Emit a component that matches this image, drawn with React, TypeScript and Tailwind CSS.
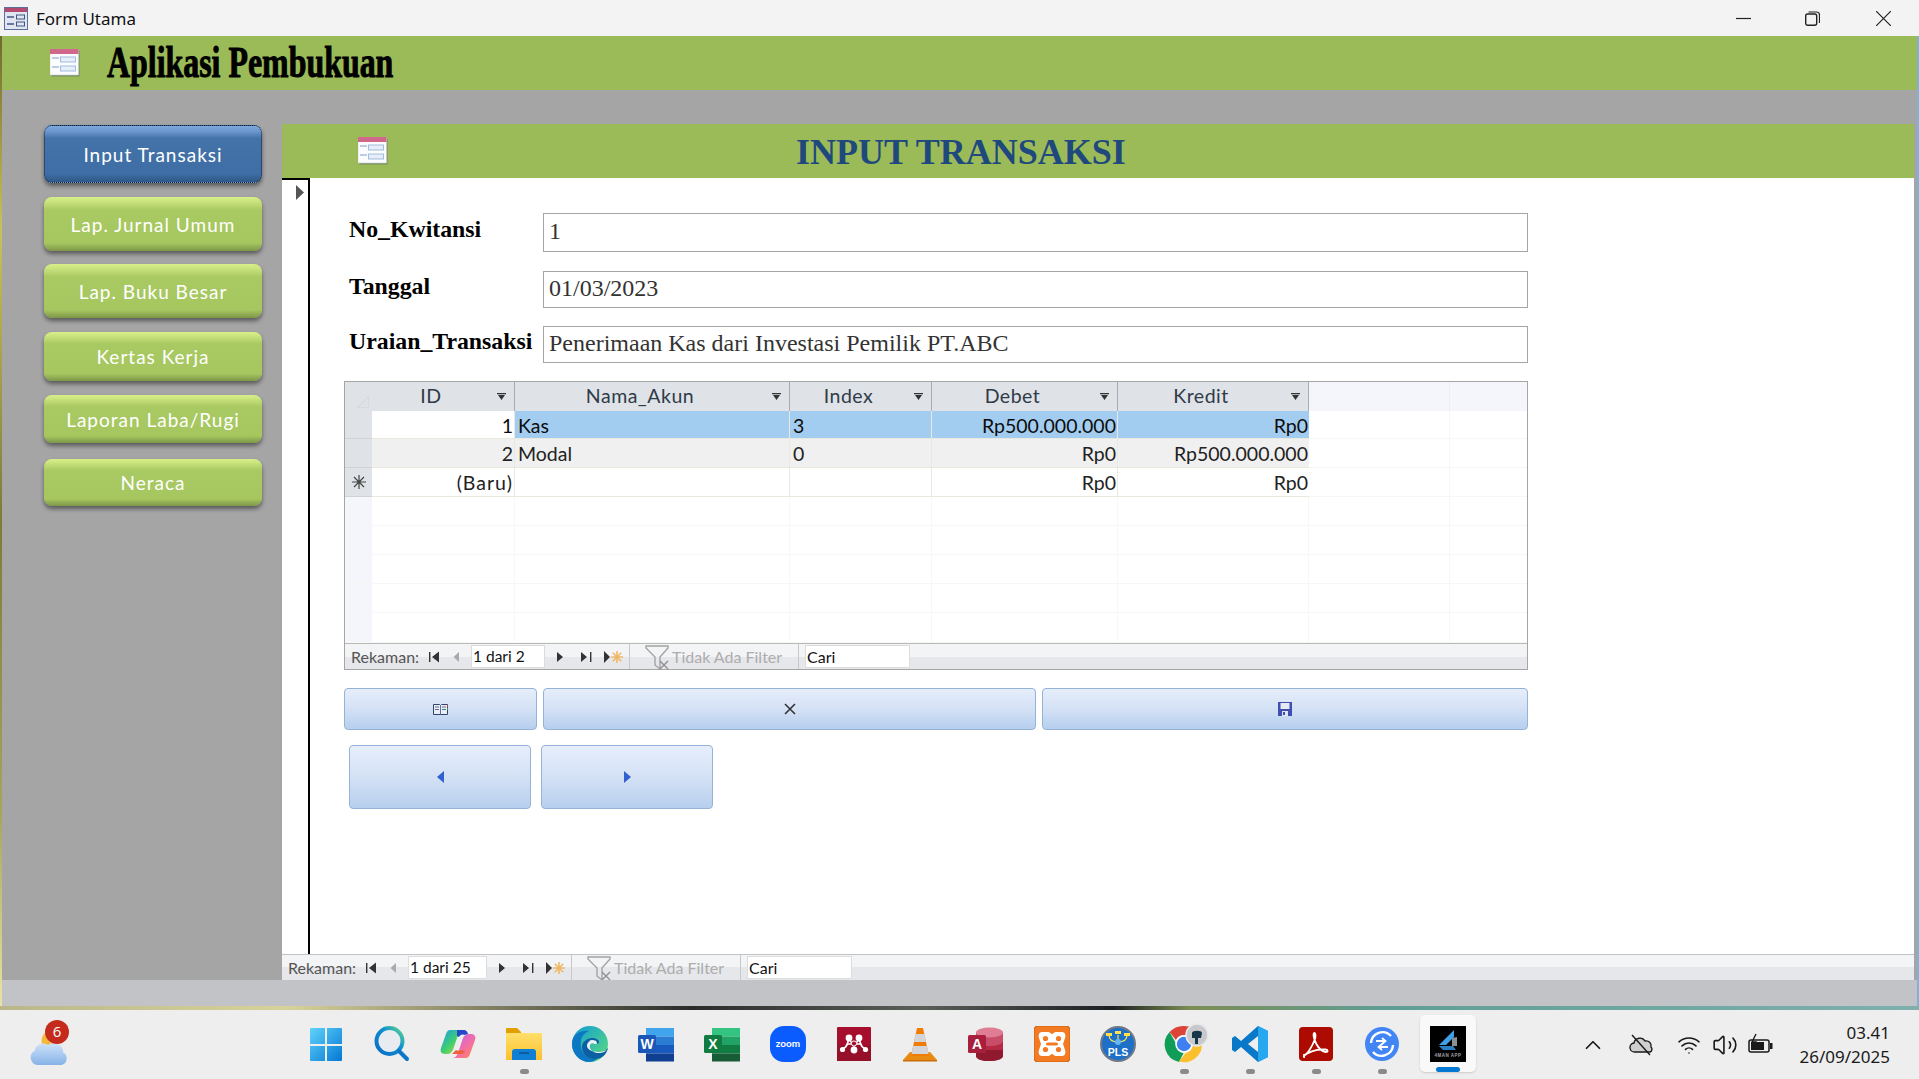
import { ChevronUp, Volume2, Wifi } from "lucide-react";

const cols = ["w-[143px]", "w-[275px]", "w-[142px]", "w-[186px]", "w-[191px]", "w-[141px]", "flex-1"];

const menuItems = [
  { label: "Input Transaksi", cls: "h-[58px] mt-[35px]", active: true },
  { label: "Lap. Jurnal Umum", cls: "h-[54px] mt-[14px]" },
  { label: "Lap. Buku Besar", cls: "h-[54px] mt-[13px]" },
  { label: "Kertas Kerja", cls: "h-[49px] mt-[14px]" },
  { label: "Laporan Laba/Rugi", cls: "h-[48px] mt-[14px]" },
  { label: "Neraca", cls: "h-[47px] mt-[16px]" },
];

const FormIcon = ({ className }: { className: string }) => (
  <svg viewBox="0 0 30 28" className={className}>
    <rect x="1.5" y="1.5" width="28" height="26" fill="#5a6a60" opacity="0.55" />
    <rect x="0" y="0" width="28.5" height="26" fill="#fbfcfe" stroke="#c9ced8" strokeWidth="0.6" />
    <rect x="0" y="0" width="28.5" height="5" fill="#d0688c" />
    <path d="M2 9h7M2 18h7" stroke="#a9bfdc" strokeWidth="1.5" />
    <rect x="10.5" y="8" width="15" height="5" fill="#e6eefa" stroke="#a3bcdc" />
    <rect x="10.5" y="17" width="15" height="5" fill="#e6eefa" stroke="#a3bcdc" />
  </svg>
);

const Step = ({ d, color = "#333" }: { d: string; color?: string }) => (
  <svg viewBox="0 0 16 16" className="w-4 h-4">
    <path d={d} fill={color} />
  </svg>
);

const NavBar = ({ pageText, inputWidth }: { pageText: string; inputWidth: string }) => (
  <div className="flex h-full items-stretch bg-[linear-gradient(180deg,#f3f4f6_0,#f3f4f6_50%,#e6e7ea_50%,#e6e7ea_100%)] font-['Lato',sans-serif] text-[16px] leading-none">
    <span className="ml-[6px] w-[72px] self-center text-[#555]">Rekaman:</span>
    <span className="flex w-[22px] items-center justify-center"><Step d="M3 3h1.4v10H3zM13 2.5v11L6 8z" /></span>
    <span className="flex w-[22px] items-center justify-center"><Step d="M11 3v10L5.5 8z" color="#aaa" /></span>
    <span className={`ml-[4px] ${inputWidth} my-[1px] flex items-center border border-[#dcdcdc] bg-white pl-[1px] text-[15.5px] text-[#111]`}>{pageText}</span>
    <span className="flex w-[30px] items-center justify-center"><Step d="M5 3v10l6-5z" /></span>
    <span className="flex w-[22px] items-center justify-center"><Step d="M3 3v10l6-5zM12 3h1.4v10H12z" /></span>
    <span className="flex w-[32px] items-center justify-center gap-[1px]">
      <svg viewBox="0 0 6 12" className="h-[12px] w-[6px]"><path d="M0 0v12l6-6z" fill="#333" /></svg>
      <svg viewBox="0 0 12 12" className="h-[12px] w-[12px]"><path d="M6 0v12M0 6h12M1.8 1.8l8.4 8.4M10.2 1.8l-8.4 8.4" stroke="#eeb868" strokeWidth="1.6" /></svg>
    </span>
    <span className="flex w-[170px] items-center border-x border-[#c8c8cc] pl-[15px]">
      <svg viewBox="0 0 26 26" className="h-[26px] w-[26px] shrink-0">
        <path d="M1 2h22v2l-8 9v12l-5-4v-8L1 4z" fill="none" stroke="#a3a3a3" strokeWidth="1.4" />
        <path d="M15 17l8 8M23 17l-8 8" stroke="#8f8f8f" strokeWidth="1.4" />
      </svg>
      <span className="ml-[1px] text-[#adadad]">Tidak Ada Filter</span>
    </span>
    <span className="ml-[6px] my-[1px] flex w-[105px] items-center border border-[#dcdcdc] bg-white pl-[1px] text-[#111]">Cari</span>
  </div>
);

const SortArrow = () => (
  <svg viewBox="0 0 9 7" className="h-[7px] w-[9px] shrink-0">
    <path d="M0 0h9v1.2H0zM1 2h7L4.500 7z" fill="#333" />
  </svg>
);

const headers = ["ID", "Nama_Akun", "Index", "Debet", "Kredit"];

const rows = [
  { id: "1", name: "Kas", index: "3", debet: "Rp500.000.000", kredit: "Rp0", rowCls: "h-[28px] bg-[#a3cdf0]", idCls: "bg-white", sel: "bg-[#dfe2e6]", text: "text-[#0c0c0c]" },
  { id: "2", name: "Modal", index: "0", debet: "Rp0", kredit: "Rp500.000.000", rowCls: "h-[29px] bg-[#f0f0f0]", idCls: "", sel: "bg-[#dfe2e6]", text: "text-[#222]" },
  { id: "(Baru)", name: "", index: "", debet: "Rp0", kredit: "Rp0", rowCls: "h-[29px] bg-white", idCls: "", sel: "bg-[#dfe2e6]", text: "text-[#222]", isNew: true },
];

const blankRows = ["h-[29px]", "h-[29px]", "h-[29px]", "h-[29px]", "h-[30px]"];

const Datasheet = () => (
  <div className="flex h-[289px] w-[1184px] flex-col border border-[#a5a5a5] bg-white font-['Lato',sans-serif] text-[19.5px] leading-none">
    <div className="flex h-[29px] bg-[#f5f6fc] text-[#2f3b49]">
      <div className="relative w-[27px] bg-[#dfe2e6]">
        <svg viewBox="0 0 12 12" className="absolute left-[12px] top-[14px] h-[12px] w-[12px]"><path d="M12 0v12H0z" fill="none" stroke="#cfd3d8" /></svg>
      </div>
      {headers.map((h, i) => (
        <div key={h} className={`${cols[i]} flex items-center border-r border-[#a9adb2] bg-[#dfe2e6] pr-[8px]`}>
          <span className="flex-1 pb-[2px] pr-[7px] text-center tracking-[0.5px]">{h}</span>
          <SortArrow />
        </div>
      ))}
      <div className="w-[141px] border-r border-[#eeeef4]" />
      <div className="flex-1" />
    </div>

    {rows.map((r) => (
      <div key={r.id} className="flex">
        <div className={`flex w-[27px] items-center justify-center ${r.sel} border-b border-[#cfd2d6]`}>
          {r.isNew && (
            <svg viewBox="0 0 14 14" className="h-[14px] w-[14px]"><path d="M7 0v14M0 7h14M2 2l10 10M12 2L2 12" stroke="#444" strokeWidth="1.2" /></svg>
          )}
        </div>
        <div className={`flex w-[1155px] ${r.text}`}>
          <div className={`flex max-w-[937px] flex-1 border-b border-[#e9e9df] ${r.rowCls}`}>
            <div className={`${cols[0]} ${r.idCls} flex items-center justify-end border-r border-[#e9e9df] pr-[1px] pt-[2px] ${r.isNew ? "tracking-[1px]" : ""}`}>{r.id}</div>
            <div className={`${cols[1]} flex items-center border-r border-[#e9e9df] pl-[3px] pt-[2px]`}>{r.name}</div>
            <div className={`${cols[2]} flex items-center border-r border-[#e9e9df] pl-[3px] pt-[2px]`}>{r.index}</div>
            <div className={`${cols[3]} flex items-center justify-end border-r border-[#e9e9df] pr-[1px] pt-[2px]`}>{r.debet}</div>
            <div className={`${cols[4]} flex items-center justify-end pr-[1px] pt-[2px]`}>{r.kredit}</div>
          </div>
          <div className="w-[141px] border-b border-r border-[#f7f7f5]" />
          <div className="flex-1 border-b border-[#f7f7f5]" />
        </div>
      </div>
    ))}

    {blankRows.map((h, n) => (
      <div key={n} className={`flex ${h} border-b border-[#f7f7f5]`}>
        <div className="w-[27px] bg-[#f5f6fc]" />
        {cols.map((c) => (
          <div key={c} className={`${c} border-r border-[#f7f7f5] last:border-r-0`} />
        ))}
      </div>
    ))}

    <div className="min-h-0 flex-1 border-t border-[#b9b9b9]">
      <NavBar pageText="1 dari 2" inputWidth="w-[74px]" />
    </div>
  </div>
);

const blueBtn = "flex items-center justify-center rounded-[4px] border border-[#95b3d7] bg-[linear-gradient(180deg,#e6eefb_0,#d4e1f5_50%,#b6cfee_100%)]";

const Field = ({ label, value, cls }: { label: string; value: string; cls: string }) => (
  <div className={`flex items-center pl-[5px] ${cls}`}>
    <span className="w-[194px] pb-[6px] text-[23.8px] font-bold leading-none text-black">{label}</span>
    <div className="flex h-full w-[985px] items-center border border-[#a5a5a5] pb-[4px] pl-[5px] text-[24px] leading-none text-[#333]">{value}</div>
  </div>
);

const WinIcon = () => (
  <svg viewBox="0 0 36 36" className="h-9 w-9">
    <defs>
      <linearGradient id="win" x1="0" y1="0" x2="1" y2="1">
        <stop offset="0" stopColor="#5fd3fb" />
        <stop offset="1" stopColor="#0578d4" />
      </linearGradient>
    </defs>
    <path d="M2 3a1 1 0 011-1h14v16H2zM19 2h14a1 1 0 011 1v15H19zM2 20h15v15H3a1 1 0 01-1-1zM19 20h15v14a1 1 0 01-1 1H19z" fill="url(#win)" />
  </svg>
);

const SearchIcon = () => (
  <svg viewBox="0 0 36 36" className="h-9 w-9">
    <defs>
      <linearGradient id="srch" x1="0" y1="1" x2="1" y2="0">
        <stop offset="0" stopColor="#0b6cc4" />
        <stop offset="0.6" stopColor="#0f8fd0" />
        <stop offset="1" stopColor="#5fd88a" />
      </linearGradient>
    </defs>
    <circle cx="15.5" cy="15" r="13" fill="#e8ecf0" stroke="url(#srch)" strokeWidth="4" />
    <path d="M25 25l8 8" stroke="#0b78c8" strokeWidth="4" strokeLinecap="round" />
  </svg>
);

const CopilotIcon = () => (
  <svg viewBox="0 0 36 36" className="h-9 w-9">
    <defs>
      <linearGradient id="cop1" x1="0" y1="0" x2="1" y2="1">
        <stop offset="0" stopColor="#1d9bf0" />
        <stop offset="0.5" stopColor="#3ccf6f" />
        <stop offset="1" stopColor="#f4d03f" />
      </linearGradient>
      <linearGradient id="cop2" x1="0" y1="0" x2="1" y2="1">
        <stop offset="0" stopColor="#b264ee" />
        <stop offset="0.5" stopColor="#f06bb0" />
        <stop offset="1" stopColor="#ff8a4c" />
      </linearGradient>
    </defs>
    <path d="M10 4h14c-3 0-5 2-6 5l-5 15c-1 2-3 4-5 4H5C1 28 0 25 1 22L6 8c.6-2 2-4 4-4z" fill="url(#cop1)" />
    <path d="M26 32H12c3 0 5-2 6-5l5-15c1-2 3-4 5-4h3c4 0 5 3 4 6l-5 14c-.6 2-2 4-4 4z" fill="url(#cop2)" />
    <path d="M17 4h7c2 0 3 1 4 4l-4 1c-2-1-4 0-5 2l-2-1z" fill="#2546c8" />
    <path d="M12 28h9c2 0 3-1 4-3l-4-1c-2 1-4 1-5 0z" fill="#f0623c" />
  </svg>
);

const FolderIcon = () => (
  <svg viewBox="0 0 36 36" className="h-9 w-9">
    <defs>
      <linearGradient id="fold" x1="0" y1="0" x2="0" y2="1">
        <stop offset="0" stopColor="#ffdf6b" />
        <stop offset="1" stopColor="#fcc02e" />
      </linearGradient>
    </defs>
    <path d="M0 3a1 1 0 011-1h10l4 4v2H0z" fill="#e0a000" />
    <path d="M0 7h35a1 1 0 011 1v26H0z" fill="url(#fold)" />
    <path d="M6 34V26a3 3 0 013-3h18a3 3 0 013 3v8z" fill="#0f7fd4" />
    <path d="M13 27h10" stroke="#0a4f8c" strokeWidth="1.4" />
  </svg>
);

const EdgeIcon = () => (
  <svg viewBox="0 0 36 36" className="h-9 w-9">
    <defs>
      <linearGradient id="edge1" x1="0" y1="0" x2="1" y2="1">
        <stop offset="0" stopColor="#0f9ad6" />
        <stop offset="1" stopColor="#5fe07a" />
      </linearGradient>
    </defs>
    <circle cx="18" cy="18" r="18" fill="url(#edge1)" />
    <path d="M0 18C0 8 9 4 17 5c-8 3-9 10-8 16 1 7 8 13 16 12-2 2-5 3-8 3C8 36 0 28 0 18z" fill="#0c78c4" />
    <path d="M36 22c-1 6-7 12-14 11-7 0-12-6-12-12 0-5 5-9 10-9 4 0 7 2 7 4 0 1-1 2-3 2 0-2-3-2-5-1-3 2-2 6 1 8 5 3 12 2 16-3z" fill="#0d5fa4" />
    <path d="M20 14c3 0 5 1 5 3 0 1-1 1-2 1s-1-1-2-2-4-1-5 1c1-2 2-3 4-3z" fill="#eef2f6" />
    <path d="M15 20c0-3 2-5 5-5 2 0 3 1 3 3-3-2-6 0-5 4 1 3 5 5 9 5 3 0 6-1 9-4-1 1-5 3-10 3-6 0-11-3-11-6z" fill="#eef2f6" />
  </svg>
);

const OfficeIcon = ({ letter, tile, bars }: { letter: string; tile: string; bars: string[] }) => (
  <svg viewBox="0 0 36 36" className="h-9 w-9">
    <rect x="8" y="2" width="28" height="8.5" fill={bars[0]} />
    <rect x="8" y="10.5" width="28" height="8.5" fill={bars[1]} />
    <rect x="8" y="19" width="28" height="8.5" fill={bars[2]} />
    <rect x="8" y="27.5" width="28" height="8" fill={bars[3]} />
    <rect x="0" y="9" width="18" height="18" rx="1.5" fill={tile} />
    <text x="9" y="23" textAnchor="middle" fontSize="14" fontWeight="700" fontFamily="'Liberation Sans',sans-serif" fill="#fff">{letter}</text>
  </svg>
);

const ZoomIcon = () => (
  <svg viewBox="0 0 36 36" className="h-9 w-9">
    <rect x="0" y="0" width="36" height="36" rx="14" fill="#0b5cff" />
    <text x="18" y="20.5" textAnchor="middle" fontSize="10" fontWeight="700" fontFamily="'Lato',sans-serif" fill="#fff">zoom</text>
  </svg>
);

const MendeleyIcon = () => (
  <svg viewBox="0 0 36 36" className="h-9 w-9">
    <rect x="1" y="1" width="34" height="34" rx="1" fill="#a50e2d" />
    <rect x="1" y="19" width="34" height="16" fill="#96102a" />
    <path d="M6.500 23c4-1 5-5 6-9M29.500 23c-4-1-5-5-6-9M12 12l6 8 6-8M12 18h12" stroke="#fff" strokeWidth="1.6" fill="none" />
    <g fill="#fff">
      <circle cx="18" cy="24" r="3.400" />
      <circle cx="6.500" cy="23.500" r="2.600" />
      <circle cx="29.500" cy="23.500" r="2.600" />
      <circle cx="13" cy="12" r="3.400" />
      <circle cx="23" cy="12" r="3.400" />
    </g>
    <circle cx="18" cy="17.500" r="2.600" fill="#a50e2d" stroke="#fff" />
  </svg>
);

const VlcIcon = () => (
  <svg viewBox="0 0 36 36" className="h-9 w-9">
    <path d="M8 26l-7 8h34l-7-8z" fill="#e98a12" />
    <path d="M1 34h34v1.5H1z" fill="#c86d08" />
    <path d="M15 2h6l6 28H9z" fill="#f27c0a" />
    <path d="M13.5 8h9l1.4 8H12zM11 20h14l1.6 8H9.6z" fill="#d3d5d8" />
  </svg>
);

const AccessIcon = () => (
  <svg viewBox="0 0 36 36" className="h-9 w-9">
    <path d="M8 6v24c0 3 6 5 13 5s14-2 14-5V6z" fill="#b62943" />
    <path d="M8 24h27v6c0 3-7 5-14 5S8 33 8 30z" fill="#8f1a30" />
    <path d="M8 6v9c0 3 6 5 13 5s14-2 14-5V6z" fill="#c84d68" />
    <ellipse cx="21.5" cy="6.5" rx="13.5" ry="5" fill="#df7d95" />
    <rect x="0" y="9" width="18" height="18" rx="1.5" fill="#a81f3d" />
    <text x="9" y="23" textAnchor="middle" fontSize="14" fontWeight="700" fontFamily="'Liberation Sans',sans-serif" fill="#fff">A</text>
  </svg>
);

const XamppIcon = () => (
  <svg viewBox="0 0 36 36" className="h-9 w-9">
    <rect x="0" y="0" width="36" height="36" rx="4" fill="#f37a21" stroke="#c96516" />
    <path d="M8 6h6c2 0 3 2 4 2s2-2 4-2h6c3 0 4 3 3 6l-2 6 2 6c1 3 0 6-3 6h-6c-2 0-3-2-4-2s-2 2-4 2H8c-3 0-4-3-3-6l2-6-2-6C4 9 5 6 8 6z" fill="#fff" />
    <circle cx="11.5" cy="12.5" r="2.6" fill="#f37a21" />
    <circle cx="24.5" cy="12.5" r="2.6" fill="#f37a21" />
    <circle cx="11.5" cy="23.5" r="2.6" fill="#f37a21" />
    <circle cx="24.5" cy="23.5" r="2.6" fill="#f37a21" />
    <rect x="12" y="16.500" width="12" height="3" rx="1.500" fill="#f37a21" />
  </svg>
);

const PlsIcon = () => (
  <svg viewBox="0 0 36 36" className="h-9 w-9">
    <circle cx="18" cy="18" r="17" fill="#1e6fc8" stroke="#6f7a86" strokeWidth="2" />
    <path d="M18 9v7M9 9c0 5 4 7 9 7s9-2 9-7" fill="none" stroke="#ffe14d" strokeWidth="1.2" />
    <rect x="15" y="5" width="6" height="3" fill="#ffe14d" />
    <rect x="6" y="7" width="6" height="3" fill="#ffe14d" />
    <rect x="24" y="7" width="6" height="3" fill="#ffe14d" />
    <circle cx="18" cy="16" r="3" fill="#65b8f4" />
    <text x="18" y="30" textAnchor="middle" fontSize="10.5" fontWeight="700" fontFamily="'Liberation Sans',sans-serif" fill="#fff">PLS</text>
  </svg>
);

const ChromeIcon = () => (
  <svg viewBox="0 0 36 36" className="h-9 w-9 overflow-visible">
    <path d="M18 0a18 18 0 0115.6 9H18a9 9 0 00-8.100 5L3.600 6A18 18 0 0118 0z" fill="#db4437" />
    <path d="M3.600 6L10 17.500a9 9 0 007.600 9.500L13 36A18 18 0 013.600 6z" fill="#0f9d58" />
    <path d="M33.600 9A18 18 0 0113 35.500L20 26.500A9 9 0 0027 18c0-3-1-6-3-8z" fill="#fbc02d" />
    <circle cx="18" cy="18" r="8" fill="#3f80f0" stroke="#fff" strokeWidth="1.6" />
    <circle cx="31" cy="9" r="11" fill="#c7c9cc" stroke="#e9e9e9" strokeWidth="1.5" />
    <path d="M26 7c0-3 10-3 10 0l-1 5h-3v6h-3v-6h-3z" fill="#15384a" />
  </svg>
);

const VsCodeIcon = () => (
  <svg viewBox="0 0 36 36" className="h-9 w-9">
    <path d="M26 0l10 5v26l-10 5-17-15-6 5-3-2v-12l3-2 6 5zM26 10l-10 8 10 8z" fill="#0a78c8" />
    <path d="M26 0l10 5v26l-10 5z" fill="#26a8f0" />
  </svg>
);

const AcrobatIcon = () => (
  <svg viewBox="0 0 36 36" className="h-9 w-9">
    <rect x="1" y="1" width="34" height="34" rx="4" fill="#ad0b00" />
    <path d="M6 29c3 0 8-8 11-16 .8-3 .6-6-.6-6-1.500 0-1 5 2 11 2 4 6 8 9 8 3 0 3-2 0-2.500-4-.6-12 .5-18 4-3 1.500-4 3.500-3.400 3.500z" fill="none" stroke="#fff" strokeWidth="1.8" />
  </svg>
);

const SyncIcon = () => (
  <svg viewBox="0 0 36 36" className="h-9 w-9">
    <circle cx="18" cy="18" r="17" fill="#4285f4" />
    <path d="M7 17a11.500 11.500 0 0120-7M29 19a11.500 11.500 0 01-20 7" fill="none" stroke="#fff" strokeWidth="2.4" />
    <path d="M12 15h9M18 12l3.500 3-3.500 3M24 21h-9M18 18l-3.500 3 3.500 3" fill="none" stroke="#fff" strokeWidth="1.8" />
  </svg>
);

const AppIcon = () => (
  <svg viewBox="0 0 36 36" className="h-9 w-9">
    <rect x="0" y="0" width="36" height="36" fill="#000" />
    <path d="M24 4L9 19h7l8-8z" fill="#3fa0e8" />
    <path d="M9 20h14l3 4H13z" fill="#2c7fc4" />
    <path d="M22 12v8h5v-9z" fill="#8a8f94" />
    <text x="18" y="30.500" textAnchor="middle" fontSize="4.500" fontWeight="700" fontFamily="'Liberation Sans',sans-serif" letterSpacing="0.5" fill="#a5a5a5">4MAN APP</text>
  </svg>
);

const taskIcons = [
  { key: "win", node: <WinIcon /> },
  { key: "search", node: <SearchIcon /> },
  { key: "copilot", node: <CopilotIcon /> },
  { key: "folder", node: <FolderIcon />, open: true },
  { key: "edge", node: <EdgeIcon /> },
  { key: "word", node: <OfficeIcon letter="W" tile="#1a57b8" bars={["#41a5ee", "#2b7cd3", "#185abd", "#103f91"]} /> },
  { key: "excel", node: <OfficeIcon letter="X" tile="#107c41" bars={["#33c481", "#21a366", "#107c41", "#185c37"]} /> },
  { key: "zoom", node: <ZoomIcon /> },
  { key: "mendeley", node: <MendeleyIcon /> },
  { key: "vlc", node: <VlcIcon /> },
  { key: "access", node: <AccessIcon /> },
  { key: "xampp", node: <XamppIcon /> },
  { key: "pls", node: <PlsIcon /> },
  { key: "chrome", node: <ChromeIcon />, open: true },
  { key: "vscode", node: <VsCodeIcon />, open: true },
  { key: "acrobat", node: <AcrobatIcon />, open: true },
  { key: "sync", node: <SyncIcon />, open: true },
];

const Taskbar = () => (
  <div className="flex h-[69px] items-stretch bg-[#eeeeee]">
    <div className="flex w-[292px] items-center pl-[29px]">
      <div className="relative h-[44px] w-[38px]">
        <svg viewBox="0 0 40 44" className="h-[44px] w-[38px]">
          <defs>
            <linearGradient id="cloud" x1="0" y1="0" x2="0" y2="1">
              <stop offset="0" stopColor="#cfe2fa" />
              <stop offset="1" stopColor="#86b3e8" />
            </linearGradient>
          </defs>
          <path d="M18 8a12 12 0 00-3 16 12 12 0 0012-2A14 14 0 0118 8z" fill="#f5b93a" />
          <path d="M9 43a8 8 0 01-3-15 9 9 0 0114-6 10 10 0 0116 8 7 7 0 01-2 13z" fill="url(#cloud)" />
        </svg>
        <span className="absolute left-[16px] top-[-3px] flex h-[24px] w-[24px] items-center justify-center rounded-full bg-[#c42b1c] font-['Open_Sans',sans-serif] text-[15px] leading-none text-white">6</span>
      </div>
    </div>

    {taskIcons.map((t, i) => (
      <div key={t.key} className={`flex flex-col items-center pt-[16px] ${i === 0 ? "w-[67px]" : "w-[66px]"}`}>
        <div className="h-9">{t.node}</div>
        <div className={`mt-[7px] h-[5px] w-[9px] rounded-full ${t.open ? "bg-[#8a8a8a]" : ""}`} />
      </div>
    ))}

    <div className="flex w-[66px] flex-col items-center justify-between">
      <div className="mt-[5px] flex h-[57px] w-[56px] flex-col items-center rounded-[5px] bg-[#f9f9f9] pt-[11px] shadow-[0_1px_2px_rgba(0,0,0,0.15)]">
        <AppIcon />
        <div className="mt-[5px] h-[5px] w-[24px] rounded-full bg-[#0078d4]" />
      </div>
      <div className="h-[7px]" />
    </div>

    <div className="ml-auto flex items-center pr-[29px] text-[#1a1a1a]">
      <ChevronUp className="mr-[22px] h-[26px] w-[26px]" strokeWidth={1.6} />
      <svg viewBox="0 0 26 24" className="mr-[23px] h-[24px] w-[26px]">
        <path d="M7 19a4.500 4.500 0 01-1-9 6 6 0 0111-2 5 5 0 016 6 3 3 0 01-1 5z" fill="#cfcfcf" stroke="#1a1a1a" strokeWidth="1.4" />
        <path d="M4 2l18 20" stroke="#1a1a1a" strokeWidth="1.4" />
      </svg>
      <Wifi className="mr-[11px] h-[24px] w-[24px]" strokeWidth={1.6} />
      <Volume2 className="mr-[10px] h-[26px] w-[26px]" strokeWidth={1.5} />
      <svg viewBox="0 0 26 24" className="mr-[23px] h-[24px] w-[26px]">
        <rect x="1" y="7" width="20" height="12" rx="2" fill="none" stroke="#1a1a1a" strokeWidth="1.5" />
        <rect x="3" y="9" width="13" height="8" fill="#1a1a1a" />
        <rect x="22" y="10" width="2.500" height="6" fill="#1a1a1a" />
        <path d="M8 1L4 9h4l-1 6" fill="none" stroke="#1a1a1a" strokeWidth="1.4" />
      </svg>
      <div className="flex w-[93px] flex-col items-end gap-[5px] whitespace-nowrap font-['Noto_Sans',sans-serif] text-[17px] leading-[19px]">
        <span>03.41</span>
        <span>26/09/2025</span>
      </div>
    </div>
  </div>
);

export default function App() {
  return (
    <div className="flex h-[1079px] w-[1919px] flex-col overflow-hidden bg-[#eeeeee]">
      {/* title bar */}
      <div className="flex h-[36px] items-center bg-[#f3f3f3] pl-[4px]">
        <svg viewBox="0 0 24 23" className="h-[23px] w-[24px]">
          <rect x="0.5" y="0.5" width="23" height="22" fill="#dfe6f2" stroke="#5c6f9c" />
          <rect x="1" y="1" width="22" height="4" fill="#b44a72" />
          <path d="M3 10h7M3 17h7" stroke="#43557f" strokeWidth="1.4" />
          <rect x="12.500" y="8" width="8" height="4" fill="none" stroke="#43557f" />
          <rect x="12.500" y="15" width="8" height="4" fill="none" stroke="#43557f" />
        </svg>
        <span className="ml-[8px] font-['Noto_Sans',sans-serif] text-[17px] leading-none text-[#111]">Form Utama</span>
        <div className="ml-auto flex items-center pr-[28px]">
          <svg viewBox="0 0 15 15" className="h-[15px] w-[15px]"><path d="M0 7.500h15" stroke="#222" strokeWidth="1.2" /></svg>
          <svg viewBox="0 0 15 15" className="ml-[54px] h-[15px] w-[15px]">
            <rect x="0.700" y="3" width="11" height="11.300" rx="2" fill="none" stroke="#222" strokeWidth="1.4" />
            <path d="M3.500 1h8a3 3 0 013 3v8" fill="none" stroke="#222" strokeWidth="1.2" />
          </svg>
          <svg viewBox="0 0 15 15" className="ml-[56px] h-[15px] w-[15px]"><path d="M0 0l15 15M15 0L0 15" stroke="#222" strokeWidth="1.2" /></svg>
        </div>
      </div>

      <div className="flex h-[970px]">
        <div className="w-[2px] bg-[linear-gradient(180deg,#6f6a2e_0,#c9c25a_20%,#7d7a3c_50%,#a8a45a_80%,#e9e3a6_100%)]" />
        <div className="flex flex-1 flex-col">
          <div className="flex h-[54px] items-center bg-[#9bbb59] pl-[48px]">
            <FormIcon className="h-[28px] w-[30px]" />
            <span className="ml-[27px] inline-block origin-left scale-x-[0.725] whitespace-nowrap font-['Liberation_Serif',serif] text-[44px] font-bold leading-none text-black [-webkit-text-stroke:1px_black]">Aplikasi Pembukuan</span>
          </div>

          <div className="flex flex-1 bg-[#a5a5a5]">
            <div className="flex w-[280px] flex-col pl-[42px]">
              {menuItems.map((m) => (
                <div
                  key={m.label}
                  className={`flex w-[218px] shrink-0 items-center justify-center rounded-[8px] font-['Lato',sans-serif] text-[19px] leading-none tracking-[1px] text-white shadow-[0_3px_4px_rgba(0,0,0,0.45)] ${m.cls} ${
                    m.active
                      ? "border border-dotted border-[#10233c] bg-[linear-gradient(180deg,#7fa9dc_0,#6a96cd_10%,#4473a9_22%,#3f6ea6_85%,#2f5885_100%)]"
                      : "bg-[linear-gradient(180deg,#d9f08a_0,#c6e07a_10%,#a9c963_24%,#a6c660_85%,#7e9648_100%)]"
                  }`}
                >
                  {m.label}
                </div>
              ))}
            </div>

            <div className="mr-[3px] mt-[34px] flex flex-1 flex-col bg-white">
              <div className="flex h-[54px] items-center bg-[#9bbb59] pl-[76px]">
                <FormIcon className="h-[28px] w-[30px]" />
                <span className="ml-[408px] pt-[2px] font-['Liberation_Serif',serif] text-[36px] font-bold leading-none text-[#1f497d]">INPUT TRANSAKSI</span>
              </div>

              <div className="flex min-h-0 flex-1 font-['Liberation_Serif',serif]">
                <div className="w-[28px] shrink-0 border-r-2 border-t-2 border-black pl-[14px] pt-[5px]">
                  <svg viewBox="0 0 8 15" className="h-[15px] w-[8px]"><path d="M0 0v15l8-7.500z" fill="#555" /></svg>
                </div>
                <div className="flex flex-col pl-[34px]">
                  <Field label="No_Kwitansi" value="1" cls="mt-[35px] h-[39px]" />
                  <Field label="Tanggal" value="01/03/2023" cls="mt-[19px] h-[37px]" />
                  <Field label="Uraian_Transaksi" value="Penerimaan Kas dari Investasi Pemilik PT.ABC" cls="mt-[18px] h-[37px]" />

                  <div className="mt-[18px]">
                    <Datasheet />
                  </div>

                  <div className="mt-[18px] flex h-[42px] gap-[6px]">
                    <button className={`${blueBtn} w-[193px]`}>
                      <svg viewBox="0 0 15 12" className="h-[12px] w-[15px]">
                        <path d="M0.500 1.500h6l1 1 1-1h6v10h-14z" fill="#e9edf5" stroke="#33446c" />
                        <path d="M7.500 2.500v9M2 4h4M2 6.500h4M9 4h4M9 6.500h4" stroke="#5f7096" />
                        <path d="M14 2h1v2h-1z" fill="#d33" />
                        <path d="M14 5h1v2h-1z" fill="#3a3" />
                      </svg>
                    </button>
                    <button className={`${blueBtn} w-[493px]`}>
                      <svg viewBox="0 0 12 12" className="h-[12px] w-[12px]"><path d="M1 1l10 10M11 1L1 11" stroke="#333" strokeWidth="1.6" /></svg>
                    </button>
                    <button className={`${blueBtn} w-[486px]`}>
                      <svg viewBox="0 0 14 14" className="h-[14px] w-[14px]">
                        <rect width="14" height="14" fill="#3f4fb0" />
                        <rect x="2.500" y="1" width="9" height="6" fill="#e6e9f6" />
                        <rect x="4" y="9" width="6" height="5" fill="#dfe3f2" />
                        <rect x="5" y="10" width="2" height="3" fill="#3f4fb0" />
                      </svg>
                    </button>
                  </div>

                  <div className="mt-[15px] flex h-[64px] gap-[10px] pl-[5px]">
                    <button className={`${blueBtn} w-[182px]`}>
                      <svg viewBox="0 0 7 12" className="h-[12px] w-[7px]"><path d="M7 0v12L0 6z" fill="#2f62d0" /></svg>
                    </button>
                    <button className={`${blueBtn} w-[172px]`}>
                      <svg viewBox="0 0 7 12" className="h-[12px] w-[7px]"><path d="M0 0v12l7-6z" fill="#2f62d0" /></svg>
                    </button>
                  </div>
                </div>
              </div>

              <div className="h-[26px] shrink-0 border-t border-[#c3c3c6]">
                <NavBar pageText="1 dari 25" inputWidth="w-[79px]" />
              </div>
            </div>
          </div>

          <div className="h-[26px] bg-[#c2c3c6]" />
        </div>
        <div className="w-[2px] bg-[#78b4dc]" />
      </div>

      <div className="h-[4px] bg-[linear-gradient(90deg,#b9b78a_0,#d8d29a_15%,#2a2c2a_36%,#5a5f58_48%,#1c1f22_58%,#7c8d52_62%,#5f9e94_72%,#7fb0ae_100%)]" />
      <Taskbar />
    </div>
  );
}
